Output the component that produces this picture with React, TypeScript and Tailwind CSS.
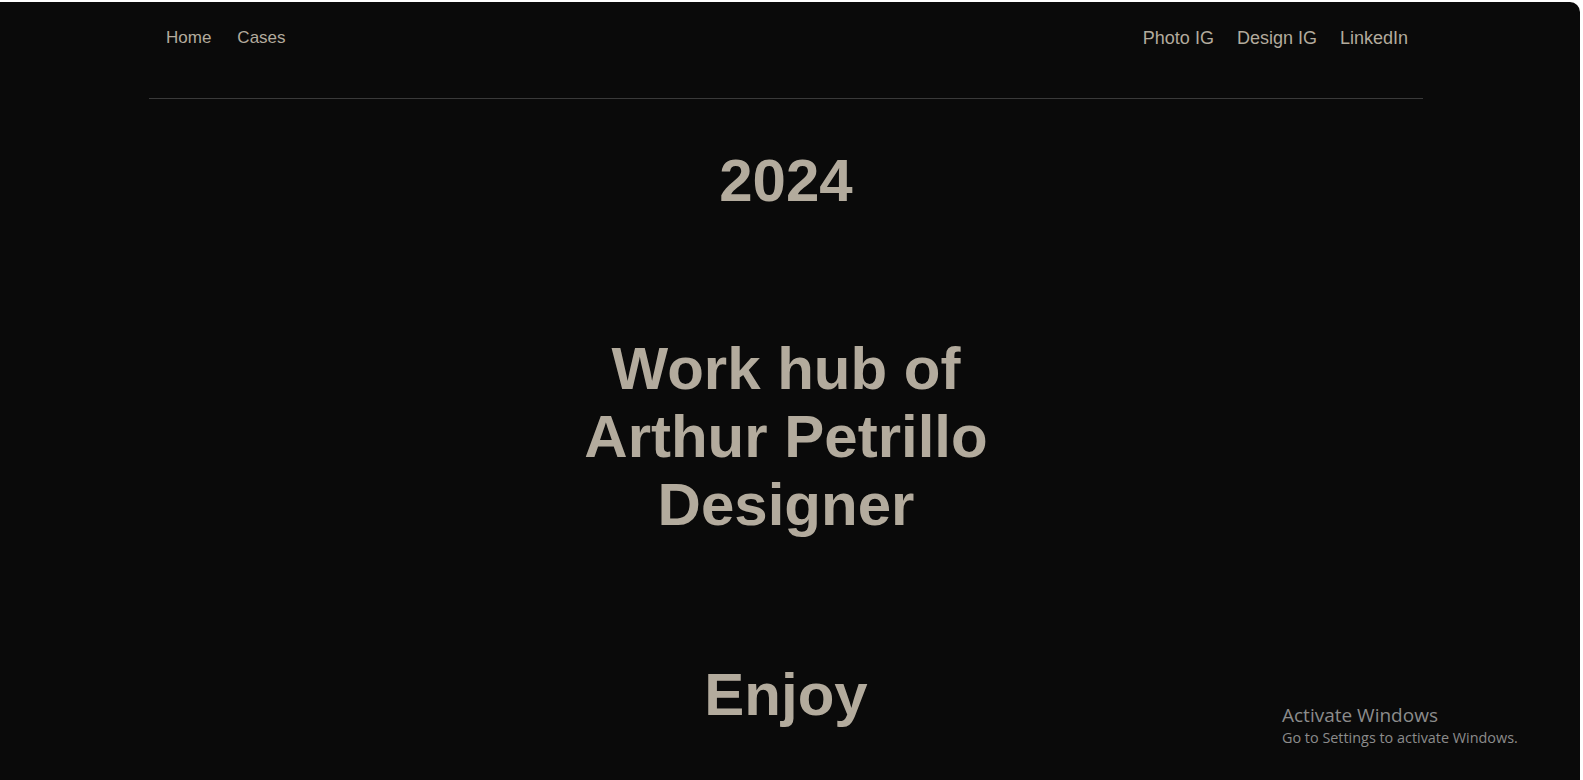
import React from "react";

export default function App() {
  const arial = { fontFamily: '"Liberation Sans", Arial, sans-serif' };
  return (
    <div className="h-[780px] w-full overflow-hidden bg-white">
      <div
        className="relative mr-[3px] mt-[2px] h-[778px] overflow-hidden rounded-tr-[10px] bg-[#0a0a0a] text-[#b3ab9d]"
        style={arial}
      >
        <div className="ml-[149px] w-[1274px]">
          <header className="flex items-center justify-between pl-[17px] pr-[15px] pt-[26px] leading-[20px]">
            <nav className="flex gap-[26px] text-[17px]">
              <a>Home</a>
              <a>Cases</a>
            </nav>
            <nav className="flex gap-[23px] text-[18px]">
              <a>Photo IG</a>
              <a>Design IG</a>
              <a>LinkedIn</a>
            </nav>
          </header>
          <div className="mt-[50px] h-px bg-[#3a3a3a]" />
          <main className="text-center text-[60px] font-bold leading-[68px]">
            <h1 className="mt-[48px]">2024</h1>
            <h1 className="mt-[120px]">
              Work hub of
              <br />
              Arthur Petrillo
              <br />
              Designer
            </h1>
            <h1 className="mt-[122px]">Enjoy</h1>
          </main>
        </div>
        <div
          className="absolute left-[1282px] top-[700px] text-[#8c8c8c]"
          style={{ fontFamily: '"Open Sans", "Noto Sans", sans-serif' }}
        >
          <div className="text-[19px] leading-[26px]">Activate Windows</div>
          <div className="text-[14.4px] leading-[20px]">Go to Settings to activate Windows.</div>
        </div>
      </div>
    </div>
  );
}
